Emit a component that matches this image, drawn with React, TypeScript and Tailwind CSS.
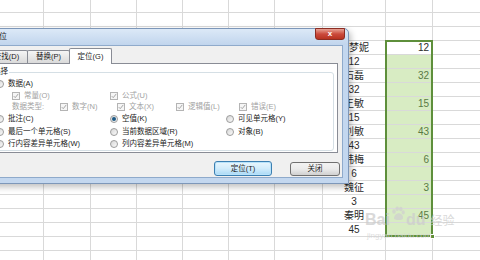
import React from "react";

// column widths of the sheet, border included
const COL_W = ["w-[44px]", "w-[47px]", "w-[46px]", "w-[46px]", "w-[46px]", "w-[46px]", "w-[48px]", "w-[63px]", "w-[47px]"];

const NAMES: Record<number, string> = {
  3: "韩梦妮", 4: "12", 5: "石磊", 6: "32", 7: "王敏", 8: "15", 9: "刘敏",
  10: "43", 11: "韩梅", 12: "6", 13: "魏征", 14: "3", 15: "秦明", 16: "45",
};

const VALUES: Record<number, string> = { 3: "12", 5: "32", 7: "15", 9: "43", 11: "6", 13: "3", 15: "45" };

function Sheet() {
  const rows = Array.from({ length: 19 }, (_, i) => i);
  return (
    <div className="flex flex-col">
      {rows.map((r) => (
        <div key={r} className={`flex shrink-0 ${r === 0 ? "h-[13px]" : "h-[14px]"}`}>
          {COL_W.map((w, c) => {
            const green = c === 8 && r >= 4 && r <= 16;
            return (
              <div
                key={c}
                className={`${w} shrink-0 box-border border-r border-b border-[#d9d9d9] flex items-center text-[10px] leading-none ${
                  c === 7 ? "justify-center text-[#2b2b2b]" : "justify-end pr-[3px]"
                } ${green ? "bg-[#d8ecc3] text-[#587a44]" : "text-[#2b2b2b]"}`}
              >
                {c === 7 && NAMES[r]}
                {c === 8 && VALUES[r]}
              </div>
            );
          })}
          <div className="flex-1 border-b border-[#d9d9d9]" />
        </div>
      ))}
    </div>
  );
}

function Radio({ on }: { on?: boolean }) {
  return (
    <span className="w-[8px] h-[8px] shrink-0 rounded-full border border-[#9c9c9c] bg-linear-to-br from-[#d6d6d6] to-[#fbfbfb] flex items-center justify-center">
      {on && <span className="w-[4px] h-[4px] rounded-full bg-[#1d5a86]" />}
    </span>
  );
}

function Check() {
  return (
    <span className="w-[8px] h-[8px] shrink-0 border border-[#b4b4b4] bg-[#f6f6f6] flex items-center justify-center">
      <svg viewBox="0 0 8 8" className="w-[6px] h-[6px]">
        <path d="M1 4.2 L3 6.2 L7 1.2" stroke="#a3a3a3" strokeWidth="1.3" fill="none" />
      </svg>
    </span>
  );
}

function Opt({ on, label }: { on?: boolean; label: string }) {
  return (
    <span className="flex items-center gap-[4px] text-[#1b1b1b]">
      <Radio on={on} />
      {label}
    </span>
  );
}

function Box({ label }: { label: string }) {
  return (
    <span className="flex items-center gap-[4px] text-[#a2a2a2]">
      <Check />
      {label}
    </span>
  );
}

function Dialog() {
  return (
    <div className="absolute left-[-27px] top-[28px] w-[376px] h-[156px] flex flex-col border border-[#7d97b9] rounded-t-[5px] bg-[#c3d7ef] shadow-[2px_3px_6px_rgba(0,0,0,0.25)]">
      {/* title bar */}
      <div className="relative h-[16px] shrink-0 flex items-center rounded-t-[5px] bg-linear-to-b from-[#dce9f7] to-[#c1d5ed]">
        <span className="ml-[17px] text-[8px] leading-none text-[#1a1a1a]">定位</span>
        <div className="absolute right-[3px] top-[-1px] w-[30px] h-[12px] rounded-b-[3px] border border-[#8c2d23] bg-linear-to-b from-[#e6a195] via-[#cb4a3c] to-[#b7321f] flex items-center justify-center text-white text-[8px] font-bold leading-none">
          x
        </div>
      </div>

      <div className="h-[133px] mx-[5px] border border-[#8faacb] bg-[#f0f0f0] flex flex-col">
        {/* tabs */}
        <div className="flex items-end h-[17px] pl-[5px] text-[7.5px] leading-none text-[#1b1b1b]">
          <div className="w-[43px] h-[13px] border border-b-0 border-[#898c95] rounded-t-[2px] bg-linear-to-b from-[#f5f5f5] to-[#dadada] flex items-center justify-center">
            查找(D)
          </div>
          <div className="w-[43px] h-[13px] -ml-px border border-b-0 border-[#898c95] rounded-t-[2px] bg-linear-to-b from-[#f5f5f5] to-[#dadada] flex items-center justify-center">
            替换(P)
          </div>
          <div className="relative z-10 w-[43px] h-[16px] -ml-px -mb-px border border-b-0 border-[#898c95] rounded-t-[2px] bg-white flex items-center justify-center">
            定位(G)
          </div>
        </div>

        {/* tab panel */}
        <div className="ml-[5px] mr-[4px] h-[90px] shrink-0 bg-white border border-[#898c95] flex flex-col">
          <div className="relative mt-[8px] ml-[2px] mr-[3px] border border-[#d5dfe5] rounded-[3px] pt-[5px] pl-[7px] text-[7.5px] leading-none">
            <span className="absolute top-[-5px] left-[3px] bg-white px-[1px] text-[#1b1b1b]">选择</span>
            <div className="h-[12px] flex items-center">
              <Opt label="数据(A)" />
            </div>
            <div className="h-[11px] flex items-center pl-[16px]">
              <div className="w-[98px]">
                <Box label="常量(O)" />
              </div>
              <Box label="公式(U)" />
            </div>
            <div className="h-[12px] flex items-center pl-[16px]">
              <div className="w-[48px] text-[#a2a2a2]">数据类型:</div>
              <div className="w-[57px]">
                <Box label="数字(N)" />
              </div>
              <div className="w-[59px]">
                <Box label="文本(X)" />
              </div>
              <div className="w-[63px]">
                <Box label="逻辑值(L)" />
              </div>
              <Box label="错误(E)" />
            </div>
            <div className="h-[12px] flex items-center">
              <div className="w-[114px]">
                <Opt label="批注(C)" />
              </div>
              <div className="w-[116px]">
                <Opt on label="空值(K)" />
              </div>
              <Opt label="可见单元格(Y)" />
            </div>
            <div className="h-[13px] flex items-center">
              <div className="w-[114px]">
                <Opt label="最后一个单元格(S)" />
              </div>
              <div className="w-[116px]">
                <Opt label="当前数据区域(R)" />
              </div>
              <Opt label="对象(B)" />
            </div>
            <div className="h-[12px] flex items-center">
              <div className="w-[114px]">
                <Opt label="行内容差异单元格(W)" />
              </div>
              <Opt label="列内容差异单元格(M)" />
            </div>
          </div>
        </div>

        {/* buttons */}
        <div className="flex justify-end items-start gap-[18px] pr-[2px] mt-[8px] text-[7.5px] leading-none text-[#1b1b1b]">
          <button className="w-[58px] h-[15px] rounded-[3px] border border-[#3c7fb1] bg-linear-to-b from-[#eaf6fd] via-[#d2ecfb] to-[#a9d9f6] shadow-[inset_0_0_0_1px_#b8e2fa]">
            定位(T)
          </button>
          <button className="w-[50px] h-[14px] mt-[1px] rounded-[3px] border border-[#707070] bg-linear-to-b from-[#f3f3f3] via-[#ebebeb] to-[#d0d0d0]">
            关闭
          </button>
        </div>
      </div>
    </div>
  );
}

function Watermark() {
  return (
    <div className="absolute left-[365px] top-[206px] flex flex-col items-start opacity-75">
      <div className="flex items-end text-[#cdcdcd] font-bold text-[16px] leading-none">
        <span>Bai</span>
        <svg viewBox="0 0 20 20" className="w-[16px] h-[16px] mb-[6px]">
          <ellipse cx="5" cy="7" rx="2.2" ry="2.8" fill="#d0d0d0" />
          <ellipse cx="9" cy="3.5" rx="2.2" ry="2.8" fill="#d0d0d0" />
          <ellipse cx="13.5" cy="3.8" rx="2.2" ry="2.8" fill="#d0d0d0" />
          <ellipse cx="16.5" cy="8" rx="2" ry="2.6" fill="#d0d0d0" />
          <path d="M5 16 C5 11 9 9 11 9 C14 9 17 12 16 16 C15 18 7 18 5 16 Z" fill="#d0d0d0" />
        </svg>
        <span>du</span>
        <span className="ml-[5px] text-[12px] font-normal mb-[1px]">经验</span>
      </div>
      <span className="mt-[4px] ml-[2px] text-[8px] text-[#d4d4d4] leading-none">jingyan.baidu.com</span>
    </div>
  );
}

export default function App() {
  return (
    <div className="relative w-[480px] h-[260px] overflow-hidden bg-white font-['Liberation_Sans','Noto_Sans_CJK_SC',sans-serif]">
      <Sheet />
      {/* selected range */}
      <div className="absolute left-[385px] top-[40px] w-[48px] h-[197px] border-2 border-[#5e8f3b]" />
      <div className="absolute left-[430px] top-[234px] w-[5px] h-[5px] bg-[#5e8f3b] border border-white" />
      <Watermark />
      <Dialog />
    </div>
  );
}
